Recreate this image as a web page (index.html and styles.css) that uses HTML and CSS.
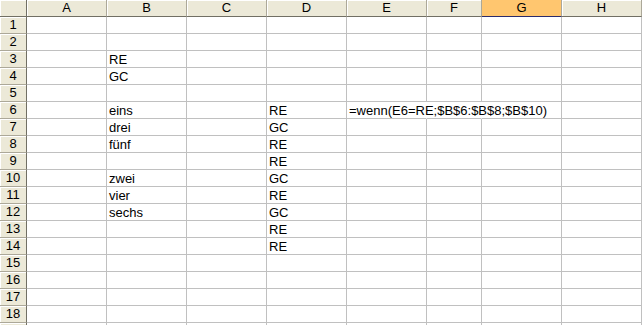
FILE: index.html
```html
<!DOCTYPE html>
<html>
<head>
<meta charset="utf-8">
<link rel="stylesheet" href="styles.css">
</head>
<body>
<div class="sheet">
  <div class="hd corner"></div>
  <div class="hd col">A</div>
  <div class="hd col">B</div>
  <div class="hd col">C</div>
  <div class="hd col">D</div>
  <div class="hd col">E</div>
  <div class="hd col">F</div>
  <div class="hd col sel">G</div>
  <div class="hd col">H</div>

  <div class="hd row">1</div><div class="c"></div><div class="c"></div><div class="c"></div><div class="c"></div><div class="c"></div><div class="c"></div><div class="c"></div><div class="c"></div>
  <div class="hd row">2</div><div class="c"></div><div class="c"></div><div class="c"></div><div class="c"></div><div class="c"></div><div class="c"></div><div class="c"></div><div class="c"></div>
  <div class="hd row">3</div><div class="c"></div><div class="c">RE</div><div class="c"></div><div class="c"></div><div class="c"></div><div class="c"></div><div class="c"></div><div class="c"></div>
  <div class="hd row">4</div><div class="c"></div><div class="c">GC</div><div class="c"></div><div class="c"></div><div class="c"></div><div class="c"></div><div class="c"></div><div class="c"></div>
  <div class="hd row">5</div><div class="c"></div><div class="c"></div><div class="c"></div><div class="c"></div><div class="c"></div><div class="c"></div><div class="c"></div><div class="c"></div>
  <div class="hd row">6</div><div class="c"></div><div class="c">eins</div><div class="c"></div><div class="c">RE</div><div class="c over">=wenn(E6=RE;$B$6:$B$8;$B$10)</div><div class="c nol"></div><div class="c"></div><div class="c"></div>
  <div class="hd row">7</div><div class="c"></div><div class="c">drei</div><div class="c"></div><div class="c">GC</div><div class="c"></div><div class="c"></div><div class="c"></div><div class="c"></div>
  <div class="hd row">8</div><div class="c"></div><div class="c">fünf</div><div class="c"></div><div class="c">RE</div><div class="c"></div><div class="c"></div><div class="c"></div><div class="c"></div>
  <div class="hd row">9</div><div class="c"></div><div class="c"></div><div class="c"></div><div class="c">RE</div><div class="c"></div><div class="c"></div><div class="c"></div><div class="c"></div>
  <div class="hd row">10</div><div class="c"></div><div class="c">zwei</div><div class="c"></div><div class="c">GC</div><div class="c"></div><div class="c"></div><div class="c"></div><div class="c"></div>
  <div class="hd row">11</div><div class="c"></div><div class="c">vier</div><div class="c"></div><div class="c">RE</div><div class="c"></div><div class="c"></div><div class="c"></div><div class="c"></div>
  <div class="hd row">12</div><div class="c"></div><div class="c">sechs</div><div class="c"></div><div class="c">GC</div><div class="c"></div><div class="c"></div><div class="c"></div><div class="c"></div>
  <div class="hd row">13</div><div class="c"></div><div class="c"></div><div class="c"></div><div class="c">RE</div><div class="c"></div><div class="c"></div><div class="c"></div><div class="c"></div>
  <div class="hd row">14</div><div class="c"></div><div class="c"></div><div class="c"></div><div class="c">RE</div><div class="c"></div><div class="c"></div><div class="c"></div><div class="c"></div>
  <div class="hd row">15</div><div class="c"></div><div class="c"></div><div class="c"></div><div class="c"></div><div class="c"></div><div class="c"></div><div class="c"></div><div class="c"></div>
  <div class="hd row">16</div><div class="c"></div><div class="c"></div><div class="c"></div><div class="c"></div><div class="c"></div><div class="c"></div><div class="c"></div><div class="c"></div>
  <div class="hd row">17</div><div class="c"></div><div class="c"></div><div class="c"></div><div class="c"></div><div class="c"></div><div class="c"></div><div class="c"></div><div class="c"></div>
  <div class="hd row">18</div><div class="c"></div><div class="c"></div><div class="c"></div><div class="c"></div><div class="c"></div><div class="c"></div><div class="c"></div><div class="c"></div>
  <div class="hd row"></div><div class="c"></div><div class="c"></div><div class="c"></div><div class="c"></div><div class="c"></div><div class="c"></div><div class="c"></div><div class="c"></div>
</div>
</body>
</html>
```
FILE: styles.css
```css
html, body {
  margin: 0;
  padding: 0;
  background: #ffffff;
  overflow: hidden;
}
.sheet {
  display: grid;
  grid-template-columns: 27px 80px 80px 80px 80px 80px 55px 80px 80px;
  grid-auto-rows: 17px;
  width: 642px;
  font-family: "Liberation Sans", Arial, sans-serif;
  font-size: 13px;
  color: #000;
}
.sheet > div {
  box-sizing: border-box;
  border-right: 1px solid #c0c0c0;
  border-bottom: 1px solid #c0c0c0;
  white-space: nowrap;
  line-height: 16px;
}
.hd {
  background: #ece9d8;
  text-align: center;
  border-right-color: #aca899 !important;
  border-bottom-color: #aca899 !important;
  box-shadow: inset 1px 1px 0 #ffffff;
}
.hd.col, .hd.corner {
  border-bottom-color: #716f64 !important;
}
.hd.row, .hd.corner {
  border-right-color: #716f64 !important;
}
.hd.sel {
  background: #ffc66f;
  border-bottom-color: #2b2b6b !important;
  box-shadow: none;
}
.c {
  padding-left: 2px;
  padding-top: 1px;
}
.c.over {
  overflow: visible;
  border-right-color: transparent;
  position: relative;
  z-index: 1;
}
.c.nol {
  border-right-color: transparent;
}
```
